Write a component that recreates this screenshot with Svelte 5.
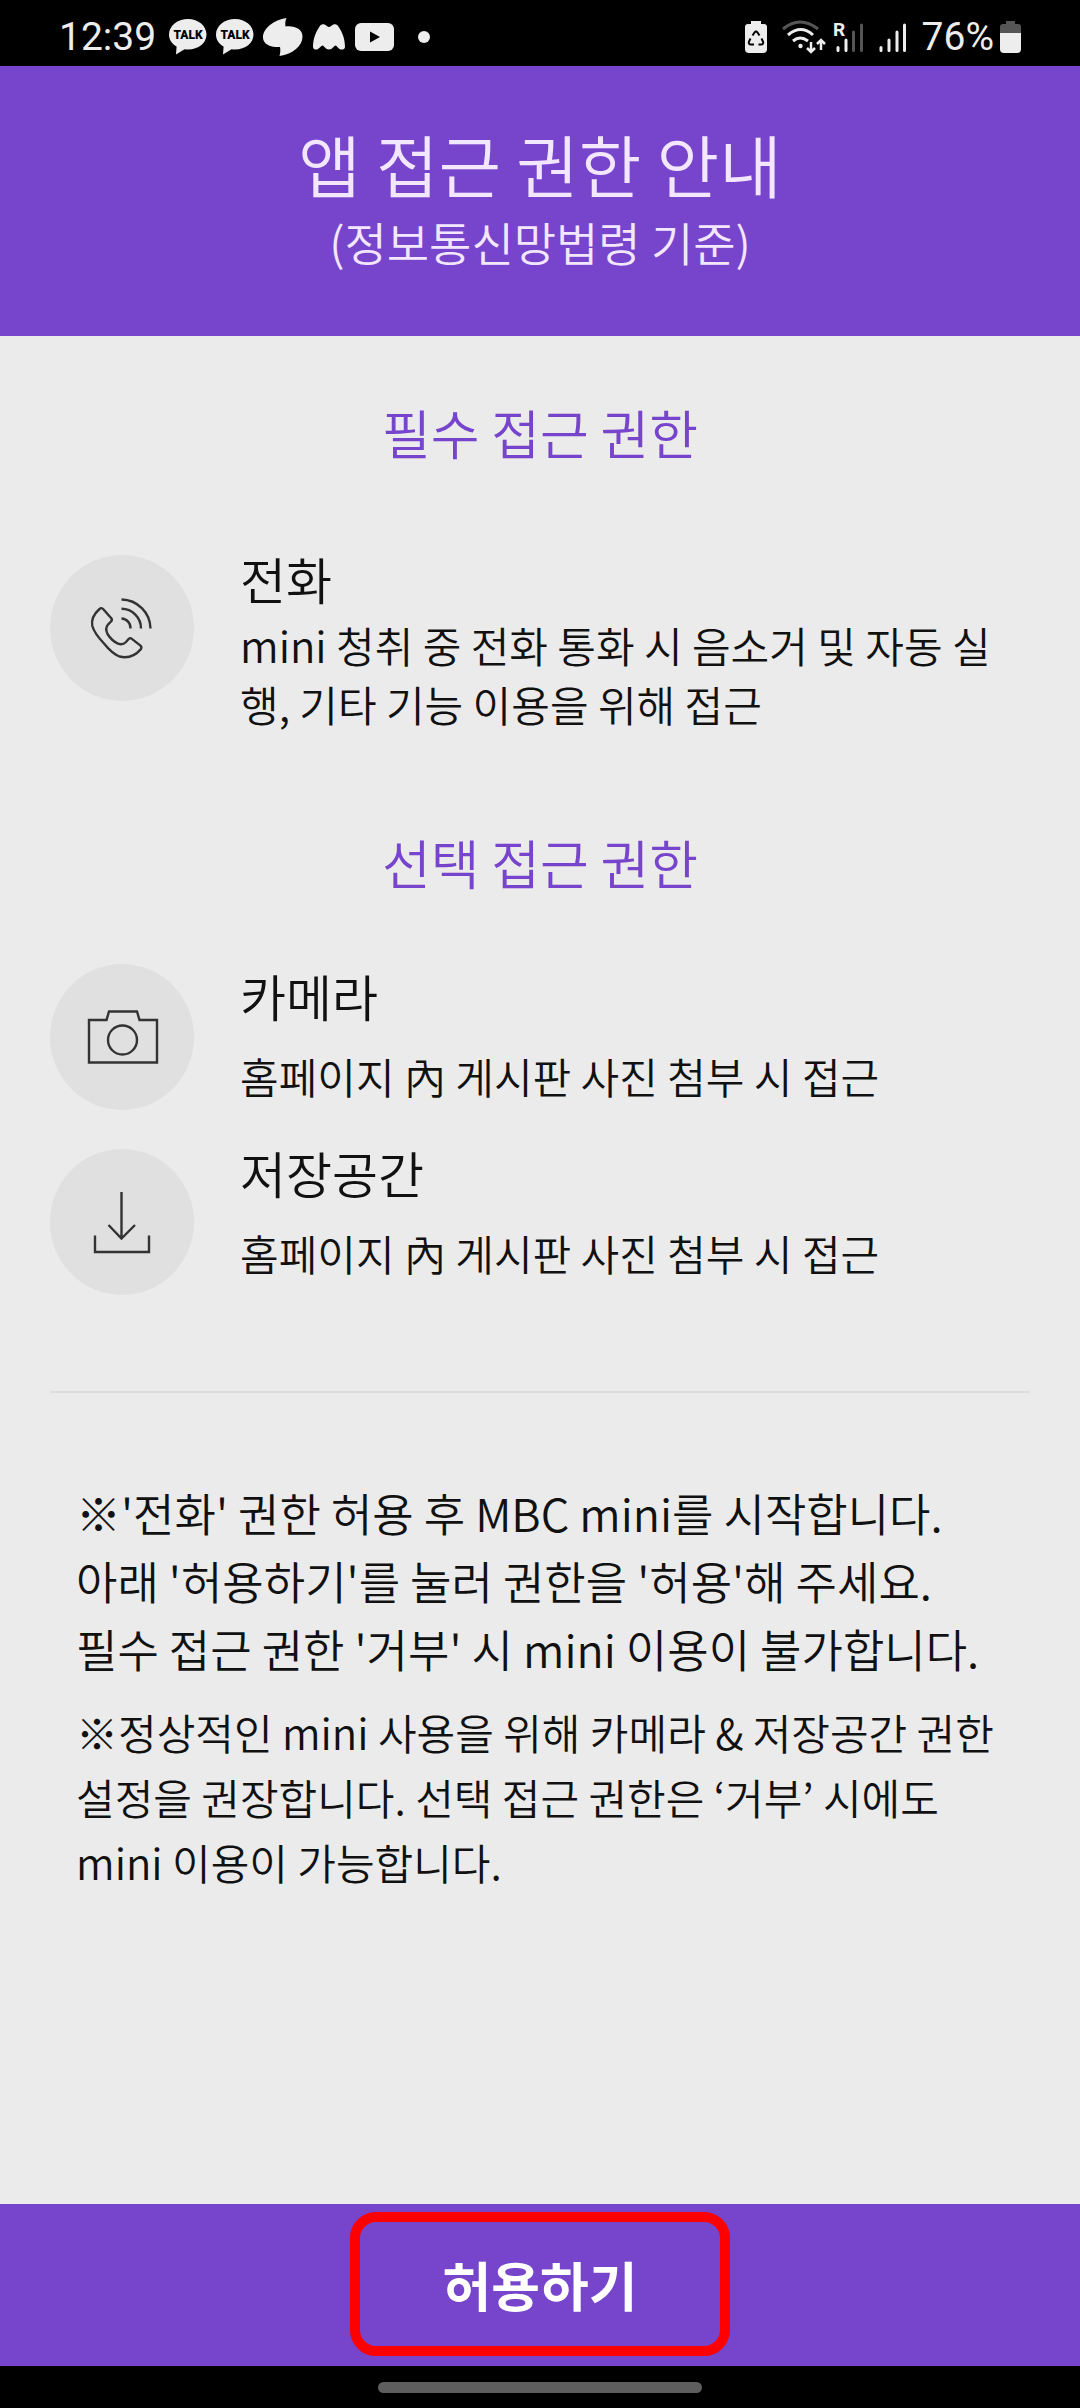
<script>
  const required = [
    {
      icon: 'phone',
      title: '전화',
      desc: 'mini 청취 중 전화 통화 시 음소거 및 자동 실행, 기타 기능 이용을 위해 접근'
    }
  ];

  const optional = [
    { icon: 'camera', title: '카메라', desc: '홈페이지 內 게시판 사진 첨부 시 접근' },
    { icon: 'storage', title: '저장공간', desc: '홈페이지 內 게시판 사진 첨부 시 접근' }
  ];
</script>

{#snippet talk()}
  <svg width="38" height="36" viewBox="0 0 38 36">
    <path fill="#ededed" d="M19 0C8.500 0 0 6.800 0 15.500c0 5.500 3 9.300 7.600 12L7 35.500l8.500-5.300c1.100.2 2.300.3 3.500.3 10.500 0 18.500-6.500 18.500-15S29.500 0 19 0z" />
    <text x="19" y="20" text-anchor="middle" font-size="12" font-weight="900" font-family="Roboto, sans-serif" fill="#000">TALK</text>
  </svg>
{/snippet}

{#snippet item(p)}
  <li class='item {p.icon}'>
    <div class='badge'>
      <svg viewBox="0 0 144 146" fill="none" stroke="#333" stroke-width="2.400">
        {#if p.icon === 'phone'}
          <path d="M71.500 44.500A29.500 29.500 0 0 1 100.500 73.500M71.500 53.800A19.500 19.500 0 0 1 91 73.500M71.500 63.500A9.500 9.500 0 0 1 80.500 73.500" />
          <path stroke-linejoin="round" d="M49.500 54q2-1.800 3.800.3l8 9q1.300 1.700-.3 3.200l-2.800 2.800q-3.500 4.200-.7 9.700 4 6.500 10.500 9.700 4.800 1.600 8-1.700l2.800-3.200q1.200-1.200 2.700-.2l9 7q1.500 1.500.4 3.500Q82 104.500 69.500 101.500 62 98.500 54 88.500 44.500 78.500 42.300 71 40.500 62 49.500 54z" />
        {:else if p.icon === 'camera'}
          <path d="M39 56h17.500l2.500-8.500h28l2.500 8.500h17.500v42.500H39z" />
          <circle cx="72.500" cy="76" r="14.500" />
        {:else}
          <path d="M71.500 43v46M58.500 76l13 13.500 13.500-13.500M45 86.500V103h54V86.500" />
        {/if}
      </svg>
    </div>
    <div class='info'>
      <h3>{p.title}</h3>
      <p>{p.desc}</p>
    </div>
  </li>
{/snippet}

<div class='screen'>
  <div class='status'>
    <div class='left'>
      <span class='clock'>12:39</span>
      {@render talk()}
      {@render talk()}
      <svg width="40" height="38" viewBox="0 0 40 38">
        <path fill="#ededed" d="M23.500 0C22 3 22.200 6 22.500 8.500 33 7.500 39.500 12 39.500 18.500 39.500 28 30 36 16.500 38c1-3.500 1-6.500.5-9C7 29.500 0 26 0 19.500 0 10 11 2 23.500 0z" />
      </svg>
      <svg width="34" height="26" viewBox="0 0 34 26">
        <path fill="#ededed" d="M7 3.500C8.500 0 11 0 13 .8c2 .9 2.500 2.200 4 2.200s2-1.300 4-2.200c2-.8 4.500-.8 6 2.700 3.500 5 6 12 6 19.500 0 2.500-3.500 3.200-5.500 2-1.800-1-2.500-3.500-4-3.500s-3 4-6.500 4-5-4-6.500-4-2.700 2.500-4.500 3.500C4.500 26.200 1 25.500 1 23 1 15.500 3.500 8.500 7 3.500z" />
      </svg>
      <svg width="40" height="28" viewBox="0 0 40 28">
        <rect width="39" height="28" rx="6" fill="#ededed" />
        <path d="M15 8.500l10 5.500-10 5.500z" fill="#000" />
      </svg>
      <span class='dot'></span>
    </div>
    <div class='right'>
      <svg class='recycle' width="22" height="32" viewBox="0 0 22 32">
        <path fill="#ededed" d="M6 0h10v3h3q3 0 3 3v22q0 4-4 4H4q-4 0-4-4V6q0-3 3-3h3z" />
        <path fill="none" stroke="#000" stroke-width="2" d="M7.500 14.500l2-3q1.500-2 3 0l2 3M16.500 17.500l1.500 3q.8 3-2 3h-2.500M9 23.500H6q-2.800 0-2-3l1.500-3" />
      </svg>
      <svg class='wifi' width="44" height="34" viewBox="0 0 44 34" fill="none" stroke-width="3">
        <path stroke="#555" d="M1 9q17-14 35 0" />
        <path stroke="#ededed" d="M6 15q13-11 25 0M11 21q7-6 15 0" />
        <circle cx="18.500" cy="26" r="2.200" fill="#ededed" />
        <path stroke="#ededed" stroke-width="2.500" d="M29 22v10M25 28l4 4 4-4M39 30V20M35 24l4-4 4 4" />
      </svg>
      <svg class='sim' width="31" height="43" viewBox="0 -6 31 43" stroke-width="3" stroke-linecap="round">
        <text x="0" y="14" font-size="19" font-weight="700" font-family="Roboto, sans-serif" fill="#ededed">R</text>
        <path stroke="#ededed" d="M5 25.500v3M13 18v10.500" />
        <path stroke="#555" d="M20.500 10v18.500M28.500 3v25.500" />
      </svg>
      <svg class='sim' width="28" height="31" viewBox="0 0 28 31" stroke="#ededed" stroke-width="3" stroke-linecap="round">
        <path d="M2 25.500v3M10 18v10.500M18 10v18.500M25.500 3v25.500" />
      </svg>
      <span class='percent'>76%</span>
      <svg width="21" height="32" viewBox="0 0 21 32">
        <path fill="#555" d="M6 0h9v3h3q3 0 3 3v7H0V6q0-3 3-3h3z" />
        <path fill="#ededed" d="M0 12h21v16q0 4-4 4H4q-4 0-4-4z" />
      </svg>
    </div>
  </div>

  <header>
    <h1>앱 접근 권한 안내</h1>
    <p>(정보통신망법령 기준)</p>
  </header>

  <main>
    <h2>필수 접근 권한</h2>
    <ul>
      {#each required as p}
        {@render item(p)}
      {/each}
    </ul>

    <h2 class='second'>선택 접근 권한</h2>
    <ul>
      {#each optional as p}
        {@render item(p)}
      {/each}
    </ul>

    <div class='notes'>
      <p class='main-note'>
        ※'전화' 권한 허용 후 MBC mini를 시작합니다.<br />
        아래 '허용하기'를 눌러 권한을 '허용'해 주세요.<br />
        필수 접근 권한 '거부' 시 mini 이용이 불가합니다.
      </p>
      <p class='sub-note'>
        ※정상적인 mini 사용을 위해 카메라 &amp; 저장공간 권한<br />
        설정을 권장합니다. 선택 접근 권한은 ‘거부’ 시에도<br />
        mini 이용이 가능합니다.
      </p>
    </div>
  </main>

  <footer>
    <button type="button">허용하기</button>
  </footer>
  <div class='nav'><span></span></div>
</div>

<style>
  :global(body) {
    margin: 0;
    background: #ebebeb;
  }
  .screen {
    display: flex;
    flex-direction: column;
    min-height: 100vh;
    font-family: "Noto Sans CJK KR", sans-serif;
    font-weight: 350;
    color: #111;
    background: #ebebeb;
  }
  h1, h2, h3, p, ul {
    margin: 0;
    padding: 0;
    font-weight: inherit;
  }

  .status {
    display: flex;
    justify-content: space-between;
    align-items: center;
    height: 66px;
    padding: 8px 59px 0 59px;
    box-sizing: border-box;
    background: #000;
    color: #ededed;
    font-family: Roboto, sans-serif;
    font-weight: 400;
    font-size: 39px;
    line-height: 58px;
  }
  .left, .right {
    display: flex;
    align-items: center;
  }
  .left {
    gap: 9px;
  }
  .clock {
    margin-right: 4px;
  }
  .dot {
    width: 12px;
    height: 12px;
    margin-left: 14px;
    border-radius: 50%;
    background: #ededed;
  }
  .recycle, .sim {
    margin-right: 15px;
  }
  .wifi {
    margin-right: 7px;
  }
  .percent {
    margin-right: 6px;
  }

  header {
    padding: 50px 0 66px;
    text-align: center;
    color: #f3e6ff;
    background: #7744cc;
  }
  h1 {
    font-size: 68px;
    line-height: 96px;
  }
  header p {
    font-size: 46px;
    line-height: 58px;
  }

  main {
    flex: 1;
    padding: 58px 50px 0;
  }
  h2 {
    margin-bottom: 85px;
    font-size: 53px;
    line-height: 76px;
    text-align: center;
    color: #7744cc;
  }
  .second {
    margin-top: 91px;
    margin-bottom: 64px;
  }
  ul {
    display: flex;
    flex-direction: column;
    gap: 39px;
    list-style: none;
  }
  .item {
    display: flex;
    align-items: flex-start;
    gap: 46px;
  }
  .badge {
    flex: none;
    width: 144px;
    height: 146px;
    border-radius: 50%;
    background: #e0e0e0;
  }
  .badge svg {
    display: block;
  }
  .info {
    flex: 1;
    margin-top: -14px;
  }
  h3 {
    font-size: 50px;
    line-height: 74px;
  }
  .info p {
    font-size: 42px;
    line-height: 59px;
    word-break: break-all;
  }
  .camera .info {
    margin-top: -6px;
  }
  .camera h3, .storage h3 {
    margin-bottom: 14px;
  }

  .notes {
    margin-top: 96px;
    padding: 86px 0 40px 26px;
    border-top: 2px solid #dcdcdc;
  }
  .main-note {
    font-size: 45px;
    line-height: 68px;
    white-space: nowrap;
  }
  .sub-note {
    margin-top: 16px;
    font-size: 42px;
    line-height: 65px;
    white-space: nowrap;
  }

  footer {
    display: flex;
    justify-content: center;
    padding: 8px 0 10px;
    background: #7744cc;
  }
  button {
    width: 380px;
    height: 144px;
    padding: 0;
    border: 10px solid #ff0000;
    border-radius: 26px;
    background: none;
    color: #fff;
    font-family: inherit;
    font-size: 53px;
    font-weight: 700;
  }
  .nav {
    display: flex;
    justify-content: center;
    padding: 16px 0 15px;
    background: #000;
  }
  .nav span {
    width: 324px;
    height: 11px;
    border-radius: 6px;
    background: #5e5e5e;
  }
</style>
